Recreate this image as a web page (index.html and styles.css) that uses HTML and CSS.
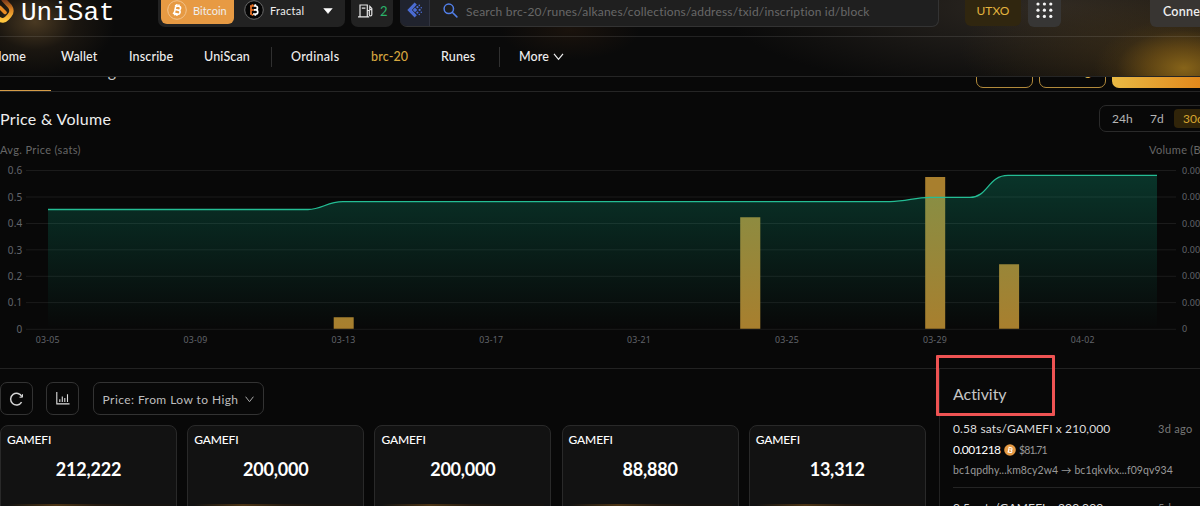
FILE: index.html
```html
<!DOCTYPE html>
<html lang="en">
<head>
<meta charset="utf-8">
<title>UniSat</title>
<link rel="stylesheet" href="styles.css">
</head>
<body>
<div class="page">
  <header class="header">
    <div class="topbar">
      <div class="brand">
        <svg class="brand-mark" width="14" height="27" viewBox="0 0 14 27">
          <defs><linearGradient id="lg" x1="0" y1="0" x2="0" y2="1"><stop offset="0" stop-color="#6e3018"/><stop offset=".5" stop-color="#dc8524"/><stop offset="1" stop-color="#ffc63f"/></linearGradient></defs>
          <path d="M3 -1 10 6.5c1.8 2.5 1.9 6.4-.3 8.7l-2.6 2.9c-2.5 2.7-5.7 3.1-8.2.6" fill="none" stroke="url(#lg)" stroke-width="4.6"/>
          <path d="M0 7.4 5 12.4" stroke="#e98b23" stroke-width="3.6" stroke-linecap="round"/>
        </svg>
        <span class="brand-name">UniSat</span>
      </div>
      <div class="network">
        <div class="net-active">
          <svg width="20" height="20" viewBox="0 0 20 20"><circle cx="10" cy="10" r="9.3" fill="#e79a43" stroke="#f3c48d"/><g transform="rotate(12 10 10)"><path d="M7 6h4.2a1.9 1.9 0 0 1 0 3.9H8v-4 8h3.5a2 2 0 0 0 0-4H8M8.8 4.2V6M11 4.2V6M8.8 14v1.8M11 14v1.8M6.6 14H8" fill="none" stroke="#fff" stroke-width="1.6"/></g></svg>
          <span class="t-bitcoin">Bitcoin</span>
        </div>
        <svg class="fractal" width="20" height="20" viewBox="0 0 20 20"><circle cx="10" cy="10" r="9.3" fill="#050505" stroke="#6a6a6a"/><path d="M6 6h4M7 6v8M7 10h3.5M6 14h2M8.5 4.3V6M8.5 14v1.7" fill="none" stroke="#ee7527" stroke-width="1.7"/><path d="M10 6h1.5a1.9 1.9 0 0 1 0 3.9H10h1.7a2 2 0 0 1 0 4.1H9M11.3 4.3V6M11.3 14v1.7" fill="none" stroke="#fff" stroke-width="1.7"/></svg>
        <span class="t-fractal">Fractal</span>
        <svg class="caret" width="10" height="6" viewBox="0 0 10 6"><path d="M.8.4h8.4L5 5.5z" fill="#fff" stroke="#fff" stroke-width=".6" stroke-linejoin="round"/></svg>
      </div>
      <div class="gas">
        <svg width="15" height="14" viewBox="0 0 15 14" fill="none" stroke="#e6e6e6" stroke-width="1.2"><path d="M2 12.6V1h7.3v11.6M0 12.8h11.2M3.8 4.2h3.6M9.5 6.5h1.8v4.3c0 1.5 2.5 1.5 2.5 0V4.4L11.2 1.6M11.8 3v2.6h2"/></svg>
        <span>2</span>
      </div>
      <div class="search">
        <div class="search-ai">
          <svg width="16" height="16" viewBox="0 0 16 16" fill="#4a6bd2"><path d="M7.6.4 9.8 2.6 4.9 7.9 9.8 13.3 7.6 15.5.3 7.9z"/><path d="M8 5.6 10.3 7.9 8 10.2 5.7 7.9z"/><circle cx="10.4" cy="5.2" r="1.1"/><circle cx="10.4" cy="10.6" r="1.1"/><circle cx="12.6" cy="7.9" r="1.1"/><circle cx="12.3" cy="3.4" r=".8"/><circle cx="12.3" cy="12.5" r=".8"/><circle cx="14.3" cy="5.7" r=".8"/><circle cx="14.3" cy="10.3" r=".8"/></svg>
        </div>
        <svg class="lens" width="15" height="15" viewBox="0 0 15 15" fill="none" stroke="#527fe8" stroke-width="1.5"><circle cx="5.8" cy="5.8" r="4.7"/><path d="m9.2 9.2 4.7 4.7" stroke-linecap="round"/></svg>
        <span class="placeholder">Search brc-20/runes/alkanes/collections/address/txid/inscription id/block</span>
      </div>
      <div class="utxo">UTXO</div>
      <div class="apps"><svg width="17" height="17" viewBox="0 0 17 17" fill="#f5f5f5"><circle cx="2" cy="2" r="1.6"/><circle cx="8.4" cy="2" r="1.6"/><circle cx="14.8" cy="2" r="1.6"/><circle cx="2" cy="8.2" r="1.6"/><circle cx="8.4" cy="8.2" r="1.6"/><circle cx="14.8" cy="8.2" r="1.6"/><circle cx="2" cy="14.4" r="1.6"/><circle cx="8.4" cy="14.4" r="1.6"/><circle cx="14.8" cy="14.4" r="1.6"/></svg></div>
      <div class="connect">Connect</div>
    </div>
    <nav class="nav">
      <a class="n-home">Home</a><a class="n-wallet">Wallet</a><a class="n-inscribe">Inscribe</a><a class="n-uniscan">UniScan</a>
      <i class="sep sep-a"></i>
      <a class="n-ordinals">Ordinals</a><a class="n-brc">brc-20</a><a class="n-runes">Runes</a>
      <i class="sep sep-b"></i>
      <a class="n-more">More</a>
      <svg width="11" height="8" viewBox="0 0 11 8" fill="none" stroke="#eee" stroke-width="1.2"><path d="m1 .8 4.5 5.6L10 .8"/></svg>
    </nav>
  </header>

  <div class="tabs">
    <div class="tab active"></div>
    <div class="tab listing">Listing</div>
    <div class="tab-actions"><b class="outline o1"></b><b class="outline o2">Listing</b><b class="solid"></b></div>
  </div>

  <section class="chart">
    <div class="chart-head">
      <h2>Price &amp; Volume</h2>
      <div class="range"><span class="r24">24h</span><span class="r7">7d</span><span class="r30">30d</span></div>
    </div>
    <div class="axis-names"><span class="avg">Avg. Price (sats)</span><span class="vol">Volume (BTC)</span></div>
    <svg class="plot" width="1200" height="208" viewBox="0 160 1200 208">
      <defs><linearGradient id="area" gradientUnits="userSpaceOnUse" x1="0" y1="175" x2="0" y2="329"><stop offset="0" stop-color="#0dc99a" stop-opacity=".23"/><stop offset="1" stop-color="#0dc99a" stop-opacity="0"/></linearGradient></defs>
      <g stroke="#1b1b1b" stroke-width="1"><path d="M26 170.5H1176M26 197H1176M26 223.5H1176M26 249.8H1176M26 276.3H1176M26 302.6H1176M26 329.3H1176"/></g>
      <g fill="#a87f2e"><path d="M333.7 317.3h20v11.5h-20zM740.2 217.2h20.1v111.6h-20.1zM925.2 177h20v151.8h-20zM999.1 264.2h20v64.6h-20z"/></g>
      <path d="M48 209.5H308C322 209.5 327 201.6 343 201.6H890C907 201.6 914 197.4 930 197.4H970C988 197.4 988 175.4 1008 175.4H1157V329H48z" fill="url(#area)"/>
      <path d="M48 209.5H308C322 209.5 327 201.6 343 201.6H890C907 201.6 914 197.4 930 197.4H970C988 197.4 988 175.4 1008 175.4H1157" fill="none" stroke="#24bd94" stroke-width="1.3"/>
      <g class="ylab" text-anchor="end"><text x="22.5" y="174">0.6</text><text x="22.5" y="200.5">0.5</text><text x="22.5" y="227">0.4</text><text x="22.5" y="253.5">0.3</text><text x="22.5" y="280">0.2</text><text x="22.5" y="306.3">0.1</text><text x="22.5" y="332.8">0</text></g>
      <g class="yright"><text x="1182" y="173.6">0.006</text><text x="1182" y="200">0.005</text><text x="1182" y="226.5">0.004</text><text x="1182" y="253">0.003</text><text x="1182" y="279.3">0.002</text><text x="1182" y="305.7">0.001</text><text x="1182" y="332.3">0</text></g>
      <g class="xlab" text-anchor="middle"><text x="47.7" y="343">03-05</text><text x="195.6" y="343">03-09</text><text x="343.5" y="343">03-13</text><text x="491.3" y="343">03-17</text><text x="639.1" y="343">03-21</text><text x="787" y="343">03-25</text><text x="934.9" y="343">03-29</text><text x="1082.7" y="343">04-02</text></g>
    </svg>
  </section>

  <main class="market">
    <section class="orders">
      <div class="tools">
        <div class="tool"><svg width="15" height="14" viewBox="0 0 15 14" fill="none" stroke="#d5d5d5" stroke-width="1.5"><path d="M12.6 10.2A5.9 5.9 0 1 1 12.9 4.6"/><path d="M13.5 2.2v3h-3" stroke-width="1"/></svg></div>
        <div class="tool"><svg width="14" height="13" viewBox="0 0 14 13" fill="none" stroke="#ddd" stroke-width="1.1"><path d="M.8 0V11.9H13.5M3.8 10V7.3M6.3 10V4.4M8.8 10V6M11.5 10V2.2"/></svg></div>
        <div class="select"><span>Price: From Low to High</span><svg width="9" height="7" viewBox="0 0 9 7" fill="none" stroke="#aaa"><path d="m.6.7 3.9 5 3.9-5"/></svg></div>
      </div>
      <div class="cards">
        <article class="card"><h3>GAMEFI</h3><p>212,222</p><i></i></article>
        <article class="card"><h3>GAMEFI</h3><p>200,000</p><i></i></article>
        <article class="card"><h3>GAMEFI</h3><p>200,000</p><i></i></article>
        <article class="card"><h3>GAMEFI</h3><p>88,880</p><i></i></article>
        <article class="card"><h3>GAMEFI</h3><p>13,312</p><i></i></article>
      </div>
    </section>
    <aside class="activity">
      <h2>Activity</h2>
      <div class="entry">
        <div class="row"><span class="deal">0.58 sats/GAMEFI x 210,000</span><span class="ago">3d ago</span></div>
        <div class="amount"><span class="btc">0.001218</span><svg width="12" height="12" viewBox="0 0 12 12"><circle cx="6" cy="6" r="5.8" fill="#e69a43"/><path transform="rotate(12 6 6)" d="M4.6 3.2v5.5M4 3.6h2.7a1.1 1.1 0 0 1 0 2.3H4.7h2.2a1.2 1.2 0 0 1 0 2.5H4" fill="none" stroke="#fff" stroke-width="1"/></svg><span class="usd">$81.71</span></div>
        <div class="addr">bc1qpdhy...km8cy2w4 → bc1qkvkx...f09qv934</div>
      </div>
      <div class="entry"><div class="row"><span class="deal">0.5 sats/GAMEFI x 200,000</span><span class="ago">5d ago</span></div></div>
      <div class="highlight"></div>
    </aside>
  </main>
</div>
</body>
</html>
```
FILE: styles.css
```css
* { box-sizing: border-box; }
body { margin: 0; background: #080808; color: #eee; font-family: Lato, "Liberation Sans", sans-serif; }
h2, h3, p { margin: 0; font-weight: 400; }
.page { width: 1200px; height: 506px; overflow: hidden; white-space: nowrap; }

/* Header */
.header {
  height: 77px; overflow: hidden; border-bottom: 1px solid #252525;
  background:
    radial-gradient(ellipse 90px 50px at 1184px 68px, #866319 0%, rgba(115,82,20,.7) 40%, rgba(80,58,18,.25) 75%, transparent 100%),
    radial-gradient(ellipse 200px 70px at 1160px 50px, rgba(80,58,22,.5), transparent),
    radial-gradient(ellipse 80px 55px at 35px 22px, rgba(95,73,42,.75), rgba(65,50,30,.3) 50%, transparent),
    radial-gradient(ellipse 70px 30px at 570px 30px, rgba(50,31,16,.4), transparent),
    radial-gradient(ellipse 330px 90px at 1050px 5px, rgba(65,57,48,.65), transparent),
    #0a0a0a;
}
.topbar { height: 37px; border-bottom: 1px solid rgba(255,255,255,.1); display: flex; align-items: flex-start; }
.topbar > * { flex: none; }
.brand { width: 158px; display: flex; }
.brand-mark { flex: none; }
.brand-name { margin-left: 7px; font: 26px/28px "Liberation Mono", monospace; margin-top: -1px; color: #fff; }
.network { width: 187px; height: 27px; background: #222; border-radius: 0 0 7px 7px; display: flex; padding-left: 3px; }
.net-active { width: 73px; height: 24px; border-radius: 0 0 6px 6px; background: #e79a43; display: flex; padding-left: 6px; }
.t-bitcoin { margin-left: 6px; font-size: 11px; line-height: 21px; }
.fractal { margin-left: 10px; }
.t-fractal { margin-left: 6px; width: 35px; font-size: 11px; line-height: 21px; letter-spacing: .3px; }
.caret { margin: 8px 0 0 18px; }
.gas { margin-left: 6px; width: 42px; height: 27px; background: #222; border-radius: 0 0 7px 7px; display: flex; gap: 7px; padding-left: 7px; font-size: 13px; line-height: 23px; color: #2bb36a; }
.gas svg { margin-top: 4px; }
.search { margin-left: 7px; width: 539px; height: 27px; background: #1f1f1f; border: solid #333; border-width: 0 1px 1px 0; border-radius: 0 0 7px 7px; display: flex; overflow: hidden; }
.search-ai { width: 30px; background: #20232e; padding: 2px 0 0 7px; border-right: 1px solid #303340; }
.lens { margin: 3px 0 0 13px; }
.placeholder { margin-left: 8px; font-size: 12px; line-height: 23px; letter-spacing: .19px; color: #686868; }
.utxo { margin-left: 26px; width: 56px; height: 26px; background: #30260f; border-radius: 0 0 6px 6px; color: #e2b33e; font-size: 12px; line-height: 22px; text-align: center; }
.apps { margin-left: 7px; width: 33px; height: 27px; background: #373635; border-radius: 0 0 6px 6px; padding: 2px 0 0 8px; }
.connect { margin-left: 89px; width: 80px; height: 27px; background: #383532; border-radius: 0 0 6px 6px; padding-left: 13px; font-size: 12.5px; line-height: 23px; font-weight: 600; letter-spacing: .2px; }
.nav { height: 39px; display: flex; align-items: center; font-size: 12.5px; font-weight: 500; letter-spacing: .14px; }
.nav a, .nav svg { flex: none; }
.n-home { margin-left: -8px; width: 69px; }
.n-wallet { width: 68px; }
.n-inscribe { width: 75px; }
.n-uniscan { width: 67px; }
.sep { flex: none; width: 1px; height: 20px; background: #303030; }
.sep-a { margin-right: 19px; }
.nav .n-ordinals { width: 80px; letter-spacing: .3px; }
.n-brc { width: 70px; color: #d6a63f; }
.n-runes { width: 58px; }
.sep-b { margin-right: 19px; }
.n-more { width: 34px; }

/* Tabs tucked under the header */
.tabs { height: 15px; overflow: hidden; display: flex; align-items: flex-end; border-bottom: 1px solid #252525; }
.tab { height: 30px; font-size: 16px; line-height: 20px; color: #c5c5c5; }
.tab.active { width: 51px; border-bottom: 1px solid #d69d48; }
.listing { margin-left: 19px; }
.tab-actions { margin-left: auto; width: 224px; display: flex; gap: 6px; align-self: flex-start; height: 11px; align-items: flex-end; }
.outline { flex: none; height: 33px; border: 1px solid #b28a3b; border-radius: 7px; color: #d9ac49; font-size: 13px; line-height: 31px; font-weight: 400; text-align: center; }
.o1 { width: 57px; }
.o2 { width: 67px; }
.solid { flex: none; width: 110px; height: 33px; border-radius: 7px; background: linear-gradient(90deg, #e8b944, #e17d12); }

/* Chart */
.chart { height: 277px; border-bottom: 1px solid #222; }
.chart-head { height: 48px; display: flex; align-items: flex-start; }
h2 { font-size: 16px; }
.chart-head h2 { flex: none; line-height: 20px; margin-top: 17px; width: 1099px; letter-spacing: .3px; }
.range { flex: none; margin-top: 13px; width: 140px; height: 27px; border: 1px solid #2a2a2a; border-radius: 7px; display: flex; align-items: center; font-size: 12px; padding-left: 12px; color: #b5b5b5; }
.r24 { width: 38px; }
.r7 { width: 24px; }
.r30 { background: #302409; color: #d6a52f; border-radius: 4px; line-height: 19px; padding: 0 9px; }
.axis-names { height: 20px; display: flex; font-size: 11px; line-height: 19px; color: #666; }
.avg { flex: none; width: 1149px; letter-spacing: .35px; }
.vol { letter-spacing: .3px; }
.plot { display: block; font-family: "Noto Sans", sans-serif; fill: #62656b; }
.ylab { font-size: 10px; letter-spacing: .2px; }
.yright { font-size: 9px; letter-spacing: .1px; }
.xlab { font-size: 8.8px; letter-spacing: .2px; }

/* Market */
.market { display: flex; height: 137px; }
.orders { width: 939px; }
.tools { display: flex; padding-top: 13px; height: 56px; }
.tool { width: 33px; height: 33px; margin-right: 13.3px; border: 1px solid #333; border-radius: 7px; display: flex; align-items: center; justify-content: center; }
.select { width: 171px; height: 33px; border: 1px solid #333; border-radius: 7px; display: flex; align-items: center; justify-content: space-between; padding: 1px 9px 0; font-size: 12px; letter-spacing: .42px; color: #bebebe; }
.cards { display: grid; grid-template-columns: repeat(5, 177px); column-gap: 10.2px; }
.card { height: 110px; background: #121212; border: 1px solid #292929; border-radius: 8px; padding: 7px 6px; display: flex; flex-direction: column; }
.card h3 { font-size: 12px; line-height: 14px; color: #fff; font-weight: 500; letter-spacing: -.15px; }
.card p { font-size: 18px; line-height: 22px; font-weight: 700; text-align: center; color: #fff; margin-top: 11px; letter-spacing: -.2px; }
.card i { height: 20px; margin-top: 24px; background: linear-gradient(90deg, #121212, #4c3414 30%, #241a10 55%, #16130f 75%); }
.activity { position: relative; width: 261px; border-left: 1px solid #222; padding-left: 13px; }
.activity h2 { line-height: 20px; margin-top: 15px; color: #c5c5c5; letter-spacing: -.05px; }
.entry { height: 82px; border-bottom: 1px solid #242424; padding-top: 13px; margin-top: 2px; }
.entry + .entry { margin-top: 0; padding-top: 10px; }
.row { display: flex; line-height: 20px; }
.deal { width: 205px; font-size: 12px; letter-spacing: .12px; color: #ddd; }
.ago { font-size: 11px; letter-spacing: .3px; color: #777; }
.amount { display: flex; align-items: center; height: 21px; }
.amount svg { flex: none; }
.btc { width: 51px; font-size: 12px; letter-spacing: -.5px; color: #fff; }
.usd { margin-left: 3px; font-size: 10.5px; letter-spacing: -.85px; color: #999; }
.addr { font-size: 10.5px; line-height: 20px; letter-spacing: .08px; color: #999; }
.highlight { position: absolute; left: -4px; top: -14px; width: 119px; height: 61px; border: 3px solid #ee5353; border-radius: 1px; }
```
